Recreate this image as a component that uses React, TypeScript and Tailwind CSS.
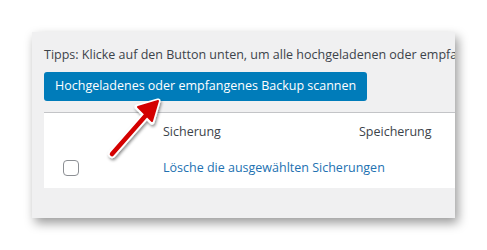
export default function App() {
  return (
    <div className="relative h-[250px] w-[487px] overflow-hidden bg-white font-['Open_Sans',sans-serif]">
      <div className="absolute left-[32px] top-[32px] h-[186px] w-[423px] overflow-hidden bg-[#f0f0f1] shadow-[3px_5px_10px_rgba(0,0,0,0.4)]">
        <div className="flex flex-col pl-[12px] pt-[14px]">
          <p className="whitespace-nowrap text-[12.5px] leading-[18px] text-[#3c434a]">
            Tipps: Klicke auf den Button unten, um alle hochgeladenen oder empfangenen Backups zu finden.
          </p>
          <div className="mt-[8px]">
            <button className="h-[29px] rounded-[3px] bg-[#007cba] px-[11px] text-[12.5px] text-white">
              Hochgeladenes oder empfangenes Backup scannen
            </button>
          </div>
          <div className="mt-[11px] border-t border-[#c3c4c7] bg-white pb-[3px]">
            <div className="flex h-[38px] items-center">
              <div className="w-[119px]" />
              <div className="w-[196px] text-[12.5px] text-[#3c434a]">Sicherung</div>
              <div className="text-[12.5px] text-[#3c434a]">Speicherung</div>
            </div>
            <div className="flex h-[34px] items-center">
              <div className="w-[119px] pl-[19px]">
                <div className="h-[16px] w-[16px] rounded-[4px] border border-[#8c8f94] bg-white" />
              </div>
              <a className="text-[12.5px] text-[#2271b1]">Lösche die ausgewählten Sicherungen</a>
            </div>
          </div>
        </div>
      </div>
      <svg className="absolute left-0 top-0" width="487" height="250" viewBox="0 0 487 250">
        <defs>
          <filter id="sh" x="-50%" y="-50%" width="200%" height="200%">
            <feDropShadow dx="1" dy="2" stdDeviation="1.5" floodColor="#000" floodOpacity="0.45" />
          </filter>
        </defs>
        <g filter="url(#sh)">
          <path d="M112 154 L148 113" stroke="#fff" strokeWidth="8" strokeLinecap="round" />
          <path d="M158 101 L137 107 L152 122 Z" fill="#fff" stroke="#fff" strokeWidth="5" strokeLinejoin="round" />
          <path d="M112 154 L148 113" stroke="#d40000" strokeWidth="4.5" strokeLinecap="round" />
          <path d="M158 101 L138 107 L152 121 Z" fill="#d40000" stroke="#d40000" strokeWidth="2" strokeLinejoin="round" />
        </g>
      </svg>
    </div>
  );
}
